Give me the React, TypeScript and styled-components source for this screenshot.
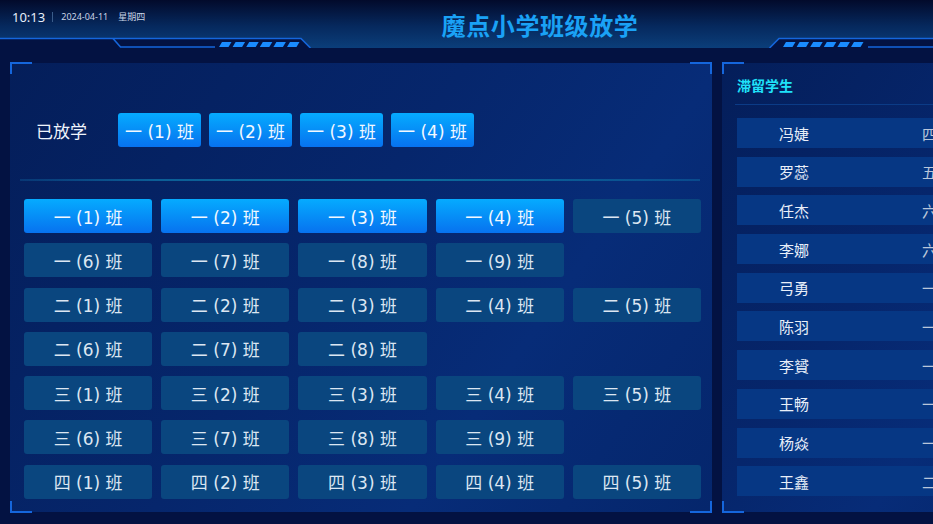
import React from 'react';
import styled, { createGlobalStyle } from 'styled-components';

const GlobalStyle = createGlobalStyle`
  html, body {
    margin: 0;
    padding: 0;
    background: #031242;
    overflow: hidden;
  }
  * {
    box-sizing: border-box;
  }
`;

const FONT = `"Noto Sans", "Noto Sans CJK SC", sans-serif`;
const BTN_FONT = `"DejaVu Sans", "Noto Sans CJK SC", sans-serif`;
const LINE = '#1566dc';

const Page = styled.div`
  width: 1080px;
  height: 524px;
  position: relative;
  overflow: hidden;
  background: #031242;
  font-family: ${FONT};
  color: #e3ebf7;
  display: flex;
  flex-direction: column;
`;

const Header = styled.header`
  position: relative;
  height: 48px;
  flex-shrink: 0;
  background: linear-gradient(180deg, #020a2b 0%, #06295e 55%, #0b3e7a 100%);
  display: grid;
  grid-template-columns: 1fr auto 1fr;
  align-items: start;
  padding: 0 12px;
`;

const Clock = styled.div`
  display: flex;
  align-items: center;
  height: 34px;
  padding-bottom: 1px;
`;

const Time = styled.span`
  font-size: 13px;
  color: #e6eefa;
`;

const Sep = styled.span`
  width: 1px;
  height: 10px;
  margin: 1px 8px 0 7px;
  background: #3a5c8a;
`;

const Small = styled.span<{ gap?: number }>`
  font-size: 9px;
  color: #c9d4e6;
  margin-left: ${({ gap }) => gap ?? 0}px;
`;

const Title = styled.h1`
  margin: 9px 0 0;
  font-size: 24px;
  line-height: 32px;
  font-weight: 700;
  letter-spacing: 0.6px;
  color: #1aa2f6;
  font-family: "Noto Sans CJK SC", sans-serif;
`;

const Deco = styled.svg`
  position: absolute;
  left: 0;
  top: 0;
  pointer-events: none;
`;

const Main = styled.main`
  flex: 1;
  display: flex;
  gap: 10px;
  padding: 15px 10px 12px 10px;
  min-height: 0;
`;

const Panel = styled.section<{ w: number }>`
  position: relative;
  width: ${({ w }) => w}px;
  flex-shrink: 0;
  display: flex;
  flex-direction: column;
  background: linear-gradient(125deg, #041e5a 0%, #06266c 45%, #072c78 70%, #05266c 100%);
`;

const Corner = styled.i<{ v: 'top' | 'bottom'; h: 'left' | 'right' }>`
  position: absolute;
  width: 22px;
  height: 12px;
  ${({ v }) => v}: -1px;
  ${({ h }) => h}: 0;
  border-${({ v }) => v}: 2px solid ${LINE};
  border-${({ h }) => h}: 2px solid ${LINE};
  pointer-events: none;
`;

const Clip = styled.div`
  flex: 1;
  overflow: hidden;
  display: flex;
  flex-direction: column;

  > * {
    flex-shrink: 0;
  }
`;

const ReleasedRow = styled.div`
  display: flex;
  align-items: center;
  padding: 50px 26px 0;
`;

const Label = styled.span`
  width: 82px;
  font-size: 17px;
  color: #eef3fb;
`;

const Chips = styled.div`
  display: flex;
  gap: 8px;
`;

const ClassBtn = styled.div<{ active?: boolean; w?: number }>`
  height: 34px;
  width: ${({ w }) => (w ? `${w}px` : 'auto')};
  border-radius: 3px;
  display: flex;
  align-items: center;
  justify-content: center;
  font-family: ${BTN_FONT};
  font-size: 17px;
  color: ${({ active }) => (active ? '#f2f8ff' : '#dce6f2')};
  background: ${({ active }) =>
    active ? 'linear-gradient(180deg, #05abff 0%, #0772ef 100%)' : '#0a467f'};
  white-space: pre;
`;

const Divider = styled.div`
  height: 2px;
  margin: 32px 12px 0 10px;
  background: linear-gradient(90deg, rgba(16, 110, 170, 0.3) 0%, #0c5e96 20%, #0c6a9c 60%, rgba(12, 100, 160, 0.55) 100%);
`;

const Groups = styled.div`
  display: flex;
  flex-direction: column;
  gap: 10.3px;
  padding: 18px 11px 0 14px;
`;

const Grade = styled.div`
  display: grid;
  grid-template-columns: repeat(5, 1fr);
  gap: 10.3px 9px;
`;

const SideHead = styled.div`
  height: 42px;
  margin: 0 0 0 13px;
  padding: 12px 0 0 2px;
  border-bottom: 1px solid #0b3b86;
  font-size: 14px;
  font-weight: 700;
  color: #1fe2fa;
  font-family: "Noto Sans CJK SC", sans-serif;
`;

const Rows = styled.div`
  display: flex;
  flex-direction: column;
  gap: 8.7px;
  padding: 13px 15px 0 15px;
`;

const Row = styled.div`
  height: 30px;
  display: grid;
  grid-template-columns: 143px 1fr;
  align-items: center;
  padding-left: 42px;
  background: #063784;
  font-size: 15px;
  color: #e9eff9;
`;

const Muted = styled.span`
  color: #b9c6da;
  font-family: ${BTN_FONT};
`;

const released = ['一 (1) 班', '一 (2) 班', '一 (3) 班', '一 (4) 班'];

const grades: { name: string; count: number }[] = [
  { name: '一', count: 9 },
  { name: '二', count: 8 },
  { name: '三', count: 9 },
  { name: '四', count: 5 },
];

const students = [
  ['冯婕', '四 (3) 班'],
  ['罗蕊', '五 (1) 班'],
  ['任杰', '六 (2) 班'],
  ['李娜', '六 (4) 班'],
  ['弓勇', '一 (5) 班'],
  ['陈羽', '一 (6) 班'],
  ['李贇', '一 (7) 班'],
  ['王畅', '一 (8) 班'],
  ['杨焱', '一 (9) 班'],
  ['王鑫', '二 (1) 班'],
];

const Stripes = ({ x }: { x: number }) => (
  <>
    {Array.from({ length: 6 }).map((_, i) => {
      const s = x + i * 13.6;
      return (
        <polygon
          key={i}
          points={`${s + 3},42 ${s + 12.5},42 ${s + 9.5},47 ${s},47`}
          fill="#1a8cff"
        />
      );
    })}
  </>
);

const Corners = () => (
  <>
    <Corner v="top" h="left" />
    <Corner v="top" h="right" />
    <Corner v="bottom" h="left" />
    <Corner v="bottom" h="right" />
  </>
);

export default function App() {
  return (
    <Page>
      <GlobalStyle />
      <Header>
        <Clock>
          <Time>10:13</Time>
          <Sep />
          <Small>2024-04-11</Small>
          <Small gap={10}>星期四</Small>
        </Clock>
        <Title>魔点小学班级放学</Title>
        <div />
        <Deco width={1080} height={48} viewBox="0 0 1080 48">
          <polygon points="0,38.5 301,38.5 310.5,48 0,48" fill="#031242" />
          <polygon points="1080,38.5 779,38.5 769.5,48 1080,48" fill="#031242" />
          <g fill="none" stroke={LINE} strokeWidth={1.6}>
            <polyline points="0,38.5 301,38.5 310.5,48" />
            <polyline points="113,38.5 120.5,47 215,47" />
            <polyline points="1080,38.5 779,38.5 769.5,48" />
            <polyline points="967,38.5 960,47 868,47" />
          </g>
          <Stripes x={219} />
          <Stripes x={783} />
        </Deco>
      </Header>

      <Main>
        <Panel w={702}>
          <Corners />
          <Clip>
            <ReleasedRow>
              <Label>已放学</Label>
              <Chips>
                {released.map((c) => (
                  <ClassBtn key={c} active w={83}>
                    {c}
                  </ClassBtn>
                ))}
              </Chips>
            </ReleasedRow>
            <Divider />
            <Groups>
              {grades.map((g) => (
                <Grade key={g.name}>
                  {Array.from({ length: g.count }).map((_, i) => {
                    const label = `${g.name} (${i + 1}) 班`;
                    return (
                      <ClassBtn key={label} active={released.includes(label)}>
                        {label}
                      </ClassBtn>
                    );
                  })}
                </Grade>
              ))}
            </Groups>
          </Clip>
        </Panel>

        <Panel w={348}>
          <Corners />
          <Clip>
            <SideHead>滞留学生</SideHead>
            <Rows>
              {students.map(([name, cls]) => (
                <Row key={name}>
                  <span>{name}</span>
                  <Muted>{cls}</Muted>
                </Row>
              ))}
            </Rows>
          </Clip>
        </Panel>
      </Main>
    </Page>
  );
}
